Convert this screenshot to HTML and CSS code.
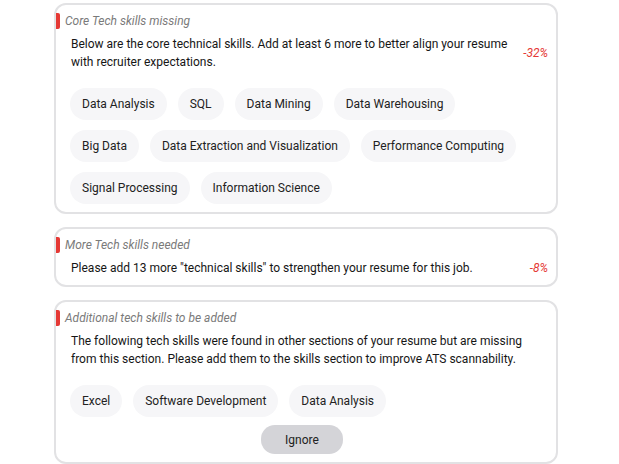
FILE: index.html
```html
<!DOCTYPE html>
<html>
<head>
<meta charset="utf-8">
<link rel="stylesheet" href="styles.css">
</head>
<body>
<div class="list">
  <section class="card">
    <div class="title">Core Tech skills missing</div>
    <div class="row">
      <p class="text">Below are the core technical skills. Add at least 6 more to better align your resume with recruiter expectations.</p>
      <span class="pct">-32%</span>
    </div>
    <div class="chips">
      <span class="chip">Data Analysis</span>
      <span class="chip">SQL</span>
      <span class="chip">Data Mining</span>
      <span class="chip">Data Warehousing</span>
      <span class="chip">Big Data</span>
      <span class="chip">Data Extraction and Visualization</span>
      <span class="chip">Performance Computing</span>
      <span class="chip">Signal Processing</span>
      <span class="chip">Information Science</span>
    </div>
  </section>
  <section class="card">
    <div class="title">More Tech skills needed</div>
    <div class="row">
      <p class="text">Please add 13 more "technical skills" to strengthen your resume for this job.</p>
      <span class="pct">-8%</span>
    </div>
  </section>
  <section class="card">
    <div class="title">Additional tech skills to be added</div>
    <div class="row">
      <p class="text">The following tech skills were found in other sections of your resume but are missing from this section. Please add them to the skills section to improve ATS scannability.</p>
    </div>
    <div class="chips">
      <span class="chip">Excel</span>
      <span class="chip">Software Development</span>
      <span class="chip">Data Analysis</span>
    </div>
    <div class="actions"><button class="btn">Ignore</button></div>
  </section>
</div>
</body>
</html>
```
FILE: styles.css
```css
* { box-sizing: border-box; }
html, body { margin: 0; padding: 0; background: #fff; }
body { font-family: Roboto, "Liberation Sans", sans-serif; color: #161616; }
.list {
  margin-left: 54px;
  width: 504px;
  padding-top: 3px;
  display: flex;
  flex-direction: column;
  gap: 13px;
}
.card {
  position: relative;
  border: 2px solid #e2e2e4;
  border-radius: 12px;
  padding: 8px 8px 8px 0;
}
.title {
  position: relative;
  font-size: 12px;
  line-height: 14px;
  font-style: italic;
  color: #7a7a7a;
  padding-left: 9px;
  margin-top: 1px;
}
.title::before {
  content: "";
  position: absolute;
  left: 0;
  top: -1px;
  width: 4px;
  height: 16px;
  background: #e53935;
  border-radius: 0 2px 2px 0;
}
.row {
  display: flex;
  align-items: center;
  margin-top: 7px;
  padding-left: 15px;
}
.text {
  margin: 0;
  font-size: 12px;
  line-height: 18px;
  flex: 0 1 464px;
}
.pct {
  margin-left: auto;
  font-size: 12px;
  font-style: italic;
  color: #e53935;
}
.chips {
  display: flex;
  flex-wrap: wrap;
  gap: 10px 11px;
  margin-top: 17px;
  padding-left: 14px;
  padding-right: 26px;
}
.chip {
  display: inline-flex;
  align-items: center;
  height: 32px;
  padding: 0 12px;
  border-radius: 16px;
  background: #f6f6f8;
  font-size: 12px;
  color: #222;
}
.actions {
  display: flex;
  justify-content: center;
  margin-top: 8px;
}
.btn {
  width: 82px;
  height: 29px;
  border: none;
  border-radius: 14px;
  background: #d4d4d8;
  font-family: inherit;
  font-size: 12px;
  color: #222;
}
```
